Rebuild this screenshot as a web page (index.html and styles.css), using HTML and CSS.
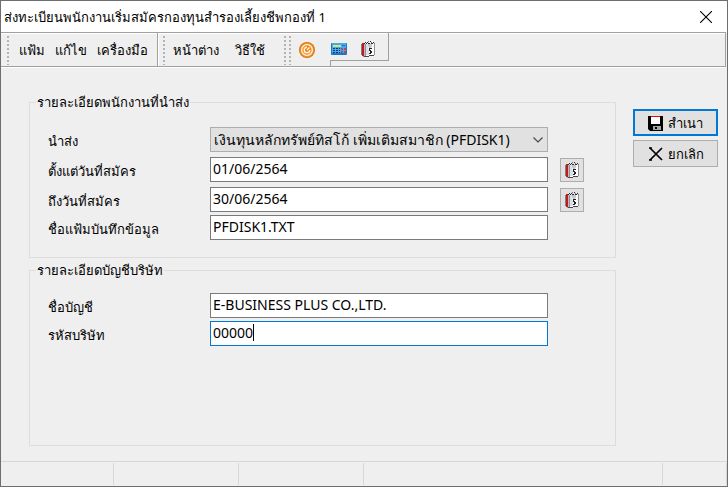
FILE: index.html
```html
<!DOCTYPE html>
<html lang="th">
<head>
<meta charset="utf-8">
<title>ส่งทะเบียนพนักงานเริ่มสมัครกองทุนสำรองเลี้ยงชีพกองที่ 1</title>
<link rel="stylesheet" href="styles.css">
</head>
<body>
<svg class="defs" aria-hidden="true">
  <symbol id="calendar" viewBox="0 0 16 16">
    <path d="M1 3h1v11H1z" fill="#8f7880"/>
    <path d="M2 2h2v13H2z" fill="#b5201e"/>
    <path d="M4 3h1v12H4z" fill="#e9a79f"/>
    <path d="M5 3h1v12H5z" fill="#8494a6"/>
    <path d="M6 3h8v11l-1 1H6z" fill="#fdfdfd"/>
    <path d="M14 2h1v12h-1z" fill="#8d9299"/>
    <path d="M6 3h2v4l1 2v5H6z" fill="#d5e0ec"/>
    <path d="M8 3h4v2l-1 2H9L8 5z" fill="#c3c5c8"/>
    <path d="M5 1h1v1H5zM7 1h1v1H7zM10 0h1v1h-1zM13 1h1v1h-1zM4 2h1v1H4zM6 2h1v1H6zM8 2h2v1H8zM11 2h2v1h-2z" fill="#2c2c2c"/>
    <path d="M8 0h1v1H8zM11 1h1v1h-1zM14 2h1v1h-1z" fill="#777"/>
    <path d="M9 7h3v1h-2v1h1v1h1v2h-1v1H9v-1h1v-2H9z" fill="#222"/>
    <path d="M3 15h6v1H4zM9 14h5v1H9z" fill="#454a52"/>
  </symbol>
</svg>
<div class="window">
  <header class="titlebar">
    <h1 class="title">ส่งทะเบียนพนักงานเริ่มสมัครกองทุนสำรองเลี้ยงชีพกองที่ 1</h1>
    <button class="close" type="button" aria-label="ปิด">
      <svg width="12" height="12" viewBox="0 0 12 12"><path d="M0 0l12 12M12 0L0 12" stroke="#000" stroke-width="1.1"/></svg>
    </button>
  </header>
  <nav class="toolbar">
    <div class="band band-edit">
      <span class="grip"></span>
      <button class="menu" type="button">แฟ้ม</button>
      <button class="menu" type="button">แก้ไข</button>
      <button class="menu" type="button">เครื่องมือ</button>
    </div>
    <div class="band band-window">
      <span class="grip"></span>
      <button class="menu" type="button">หน้าต่าง</button>
      <button class="menu" type="button">วิธีใช้</button>
    </div>
    <div class="band band-exit">
      <span class="grip"></span>
      <span class="grip"></span>
      <button class="tool" type="button" aria-label="ออก">
        <svg width="16" height="16" viewBox="0 0 16 16">
          <circle cx="8" cy="8" r="8" fill="#d8730d"/>
          <circle cx="8" cy="8" r="6.9" fill="#f59a2c"/>
          <circle cx="8" cy="8" r="5.3" fill="#ef8518" stroke="#fff3df" stroke-width="1.3"/>
          <path d="M8 5.200a2.800 2.800 0 1 0 2.800 2.800M8 8l2.500-2.500" fill="none" stroke="#fff3df" stroke-width="1.4"/>
        </svg>
      </button>
    </div>
    <div class="band band-tools">
      <button class="tool" type="button" aria-label="เครื่องคิดเลข">
        <svg width="16" height="16" viewBox="0 0 16 16">
          <rect y="2" width="16" height="12" rx="1" fill="#1779c8"/>
          <rect x="1" y="2" width="14" height="10" fill="#45aaf2"/>
          <path d="M2 4h8v2H2z" fill="#d9e477"/>
          <path d="M11 4h3v1h-3z" fill="#2c6ea6"/>
          <path d="M2 7h2v1H2zM5 7h2v1H5zM2 9h2v1H2zM5 9h2v1H5zM2 11h2v1H2zM5 11h2v1H5zM8 7h1v1H8zM8 9h1v1H8zM8 11h1v1H8z" fill="#123a63"/>
          <path d="M10 7h2v2h-2zM13 7h2v2h-2zM10 10h2v2h-2zM13 10h2v2h-2z" fill="#b4485a"/>
        </svg>
      </button>
      <button class="tool" type="button" aria-label="ปฏิทิน"><svg width="16" height="16"><use href="#calendar"/></svg></button>
    </div>
  </nav>
  <form class="content">
    <div class="groups">
      <fieldset class="group">
        <legend>รายละเอียดพนักงานที่นำส่ง</legend>
        <div class="row row-spaced">
          <label for="fund">นำส่ง</label>
          <div class="select-box">
            <select id="fund" class="field"><option>เงินทุนหลักทรัพย์ทิสโก้ เพิ่มเติมสมาชิก (PFDISK1)</option></select>
            <svg class="chevron" width="10" height="6" viewBox="0 0 10 6"><path d="M.5.5L5 5l4.500-4.500" fill="none" stroke="#444" stroke-width="1.1"/></svg>
          </div>
        </div>
        <div class="row row-spaced">
          <label for="from">ตั้งแต่วันที่สมัคร</label>
          <input id="from" class="field" type="text" value="01/06/2564">
          <button class="pick" type="button" aria-label="เลือกวันที่เริ่ม"><svg width="16" height="16"><use href="#calendar"/></svg></button>
        </div>
        <div class="row">
          <label for="to">ถึงวันที่สมัคร</label>
          <input id="to" class="field" type="text" value="30/06/2564">
          <button class="pick" type="button" aria-label="เลือกวันที่สิ้นสุด"><svg width="16" height="16"><use href="#calendar"/></svg></button>
        </div>
        <div class="row">
          <label for="file">ชื่อแฟ้มบันทึกข้อมูล</label>
          <input id="file" class="field" type="text" value="PFDISK1.TXT">
        </div>
      </fieldset>
      <fieldset class="group group-company">
        <legend>รายละเอียดบัญชีบริษัท</legend>
        <div class="row">
          <label for="account">ชื่อบัญชี</label>
          <input id="account" class="field" type="text" value="E-BUSINESS PLUS CO.,LTD.">
        </div>
        <div class="row">
          <label for="code">รหัสบริษัท</label>
          <div class="code-box">
            <input id="code" class="field field-active" type="text" value="00000">
            <span class="caret-line"><span class="caret-text" aria-hidden="true">00000</span></span>
          </div>
        </div>
      </fieldset>
    </div>
    <div class="actions">
      <button class="action action-default" type="button">
        <svg width="16" height="16" viewBox="0 0 16 16">
          <path d="M0 1h15v15H2l-2-2z" fill="#000"/>
          <path d="M3 1h9v8H3z" fill="#fff"/><path d="M3 1h9v1H3z" fill="#f00"/>
          <path d="M5 11h8v4H5z" fill="#a5a5a5"/><path d="M7 12h2v2H7z" fill="#000"/>
        </svg>
        สำเนา
      </button>
      <button class="action" type="button">
        <svg width="16" height="16" viewBox="0 0 16 16"><path d="M2 2l5 5 6 6 1 1M14 2L8 8l-5 5-1 1" fill="none" stroke="#000" stroke-width="1.7"/><path d="M1 2h3M1 14h3" stroke="#000" stroke-width="1.5"/></svg>
        ยกเลิก
      </button>
    </div>
  </form>
  <footer class="status"><span></span><span></span><span></span><span></span><span></span></footer>
</div>
</body>
</html>
```
FILE: styles.css
```css
* { box-sizing: border-box; }
body {
  margin: 0;
  background: #efefef;
  color: #000;
  font: 13px/18px "Noto Sans", "Open Sans", sans-serif;
}
button, input, select { font: inherit; color: inherit; margin: 0; }
button { display: flex; align-items: center; justify-content: center; padding: 0; border: 0; background: none; white-space: nowrap; }
svg { display: block; flex: none; }
.defs { position: absolute; width: 0; height: 0; }
.window {
  min-height: 100vh;
  display: flex;
  flex-direction: column;
  border: 1px solid #6e6e6e;
}
.titlebar {
  display: flex;
  align-items: center;
  justify-content: space-between;
  height: 31px;
  padding: 0 15px 0 3px;
  background: #fff;
}
.title { margin: 0; font-size: 13px; font-weight: 400; }
.toolbar {
  display: flex;
  height: 35px;
  margin-right: 1px;
  border: 1px solid #a0a0a0;
  border-left: 0;
  box-shadow: inset 0 1px #fff, 0 1px #fff;
}
.band { display: flex; align-items: center; }
.band-edit { width: 157px; gap: 10px; padding-left: 6px; border-right: 1px solid #a0a0a0; }
.band-window { width: 125px; gap: 8px; padding-left: 4px; border-left: 1px solid #fff; }
.band-window .menu + .menu { margin-left: 8px; }
.band-exit { width: 47px; gap: 3px; padding-left: 1px; }
.band-exit .tool { margin-left: 5px; }
.band-tools {
  position: relative;
  height: 28px;
  gap: 13px;
  padding: 4px 12px 0 1px;
  border-right: 1px solid #a0a0a0;
  border-bottom: 1px solid #a0a0a0;
}
.band-tools::after {
  content: "";
  position: absolute;
  left: 0;
  top: 27px;
  height: 6px;
  border-left: 1px solid #a0a0a0;
}
.grip {
  align-self: stretch;
  width: 2px;
  margin: 3px 0 1px;
  background: repeating-linear-gradient(#b4b4b4 0 2px, transparent 2px 4px);
}
.content {
  flex: 1;
  display: flex;
  gap: 17px;
  padding: 26px 9px 15px 28px;
}
.groups { flex: 1; display: flex; flex-direction: column; gap: 3px; }
.group {
  min-width: 0;
  margin: 0;
  padding: 16px 18px 17px;
  border: 1px solid #dcdcdc;
}
.group legend { margin-left: -12px; padding: 0 1px; }
.group-company { flex: 1; padding-top: 14px; }
.row { display: flex; align-items: center; margin-bottom: 3px; }
.row:last-child { margin-bottom: 0; }
.row-spaced { margin-bottom: 5px; }
.row label { width: 162px; flex: none; padding-top: 2px; }
.field {
  width: 100%;
  height: 25px;
  padding: 0 2px 2px;
  border: 1px solid #7a7a7a;
  border-radius: 0;
  background: #fff;
  font-size: 14px;
  outline: 0;
}
.row > .field, .select-box, .code-box { position: relative; flex: 0 1 338px; min-width: 0; }
.select-box .field { display: block; appearance: none; padding: 0 3px; border-color: #adadad; background: #e1e1e1; }
.chevron { position: absolute; right: 5px; top: 10px; pointer-events: none; }
.field-active { display: block; border-color: #0078d7; }
.caret-line { position: absolute; left: 3px; top: 3px; height: 17px; border-right: 1px solid #000; font-size: 14px; pointer-events: none; }
.caret-text { visibility: hidden; }
.pick {
  width: 24px;
  height: 24px;
  margin-left: 12px;
  border: 1px solid #adadad;
  background: #e1e1e1;
}
.actions { width: 85px; display: flex; flex-direction: column; gap: 4px; padding-top: 16px; }
.action { height: 27px; gap: 4px; border: 1px solid #adadad; background: #e1e1e1; }
.action-default { border: 2px solid #0078d7; }
.status {
  display: grid;
  grid-template-columns: 113px 125px 125px 1fr 64px;
  height: 25px;
  padding: 1px 0;
  border-top: 1px solid #d7d7d7;
}
.status span { border-right: 1px solid #d7d7d7; }
```
